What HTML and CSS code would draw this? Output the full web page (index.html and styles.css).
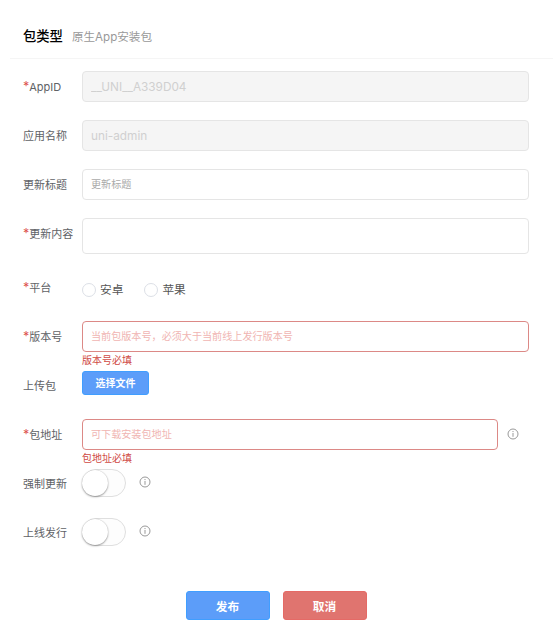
FILE: index.html
```html
<!DOCTYPE html>
<html lang="zh-CN">
	<head>
		<meta charset="utf-8">
		<title>发布新版</title>
		<link rel="stylesheet" href="styles.css">
	</head>
	<body>
		<svg class="symbols">
			<symbol id="info" viewBox="0 0 12 12">
				<circle cx="6" cy="6" r="5" fill="none" stroke="#999" stroke-width="1"/>
				<path d="M6 5v3.8M6 3v1.1" fill="none" stroke="#999" stroke-width="1"/>
			</symbol>
		</svg>

		<div class="header">
			<span class="title">包类型</span>
			<span class="sub-title">原生App安装包</span>
		</div>

		<form class="form">
			<div class="item">
				<label class="label"><span class="required">*</span>AppID</label>
				<div class="content"><input class="input" type="text" value="__UNI__A339D04" disabled></div>
			</div>
			<div class="item">
				<label class="label">应用名称</label>
				<div class="content"><input class="input" type="text" value="uni-admin" disabled></div>
			</div>
			<div class="item">
				<label class="label">更新标题</label>
				<div class="content"><input class="input" type="text" placeholder="更新标题"></div>
			</div>
			<div class="item item-textarea">
				<label class="label"><span class="required">*</span>更新内容</label>
				<div class="content"><textarea class="input textarea"></textarea></div>
			</div>
			<div class="item">
				<label class="label"><span class="required">*</span>平台</label>
				<div class="content radios">
					<label class="radio"><input type="radio" name="platform">安卓</label>
					<label class="radio"><input type="radio" name="platform">苹果</label>
				</div>
			</div>
			<div class="item">
				<label class="label"><span class="required">*</span>版本号</label>
				<div class="content">
					<input class="input is-error" type="text" placeholder="当前包版本号，必须大于当前线上发行版本号">
					<div class="error">版本号必填</div>
				</div>
			</div>
			<div class="item">
				<label class="label">上传包</label>
				<div class="content"><button class="button upload" type="button">选择文件</button></div>
			</div>
			<div class="item">
				<label class="label"><span class="required">*</span>包地址</label>
				<div class="content">
					<div class="with-icon">
						<input class="input is-error" type="text" placeholder="可下载安装包地址">
						<svg class="icon"><use href="#info"/></svg>
					</div>
					<div class="error">包地址必填</div>
				</div>
			</div>
			<div class="item">
				<label class="label">强制更新</label>
				<div class="content switch-row">
					<span class="switch"><span class="knob"></span></span>
					<svg class="icon"><use href="#info"/></svg>
				</div>
			</div>
			<div class="item">
				<label class="label">上线发行</label>
				<div class="content switch-row">
					<span class="switch"><span class="knob"></span></span>
					<svg class="icon"><use href="#info"/></svg>
				</div>
			</div>

			<div class="actions">
				<button class="button" type="button">发布</button>
				<button class="button warn" type="button">取消</button>
			</div>
		</form>
	</body>
</html>
```
FILE: styles.css
```css
* {
	box-sizing: border-box;
}

body {
	margin: 0;
	background-color: #fff;
	color: #606266;
	font-family: Inter, "Noto Sans CJK SC", sans-serif;
	font-size: 11px;
}

input, textarea, button {
	margin: 0;
	font-family: inherit;
}

.symbols {
	display: none;
}

.header {
	display: flex;
	align-items: center;
	gap: 9px;
	height: 59px;
	margin-left: 10px;
	padding: 12px 0 0 13px;
	border-bottom: 1px solid #f5f5f5;
}

.title {
	color: #000;
	font-size: 13.3px;
	font-weight: 500;
}

.sub-title {
	padding-top: 1px;
	color: #999;
	font-size: 11.6px;
}

.form {
	padding: 12px 24px 0 23px;
}

.item {
	display: flex;
	height: 49px;
}

.item-textarea {
	height: 54px;
}

.label {
	width: 59px;
	height: 31px;
	line-height: 32px;
	white-space: nowrap;
}

/* the larger asterisk must not push the label's baseline down */
.required {
	color: #dd524d;
	font-size: 12.5px;
	line-height: 1;
}

.content {
	flex: 1;
	min-width: 0;
}

.input {
	display: block;
	width: 100%;
	height: 31px;
	padding: 0 8px 1px;
	border: 1px solid #e5e5e5;
	border-radius: 4px;
	background-color: #fff;
	color: #333;
	font-size: 11.8px;
	outline: none;
}

.input::placeholder {
	color: #aaa;
	font-size: 10.1px;
	opacity: 1;
}

.input:disabled {
	padding: 1px 8px 0;
	background-color: #f5f5f5;
	color: #d0d0d0;
}

.textarea {
	height: 36px;
	resize: none;
}

.is-error {
	border-color: #dc8986;
}

.is-error::placeholder {
	color: #f0b5b2;
}

.error {
	height: 18px;
	color: #cf4a45;
	font-size: 10px;
	line-height: 17px;
}

.radios {
	display: flex;
	align-items: center;
	gap: 21px;
	height: 36px;
}

.radio {
	display: flex;
	align-items: center;
	gap: 4px;
	color: #555;
	font-size: 11.7px;
	line-height: 16px;
}

.radio input {
	appearance: none;
	width: 14px;
	height: 14px;
	border: 1px solid #dcdfe6;
	border-radius: 50%;
}

.button {
	width: 84px;
	height: 29px;
	padding: 0 0 1px;
	border: 1px solid #409eff;
	border-radius: 3px;
	background-color: #5c9df9;
	color: #fff;
	font-size: 11.7px;
	font-weight: 700;
}

.upload {
	display: block;
	width: 67px;
	height: 24px;
	margin-top: 1px;
	font-size: 10px;
}

.warn {
	border-color: #e56a66;
	background-color: #e0746f;
}

.with-icon {
	display: flex;
	align-items: center;
	gap: 9px;
	padding-right: 10px;
}

.icon {
	flex: none;
	width: 12px;
	height: 12px;
	margin-bottom: 1px;
}

.switch-row {
	display: flex;
	align-items: center;
	gap: 13px;
	height: 29px;
}

.switch {
	width: 44px;
	height: 28px;
	margin-top: 1px;
	border: 1px solid #dfdfdf;
	border-radius: 14px;
	background-color: #fdfdfd;
}

.knob {
	display: block;
	width: 26px;
	height: 26px;
	margin-left: -1px;
	border-radius: 50%;
	background-color: #fff;
	box-shadow: 0 0 1px rgba(0, 0, 0, 0.25), 0 1px 2px rgba(0, 0, 0, 0.35);
}

.actions {
	display: flex;
	justify-content: center;
	gap: 13px;
	padding-top: 25px;
}
```
